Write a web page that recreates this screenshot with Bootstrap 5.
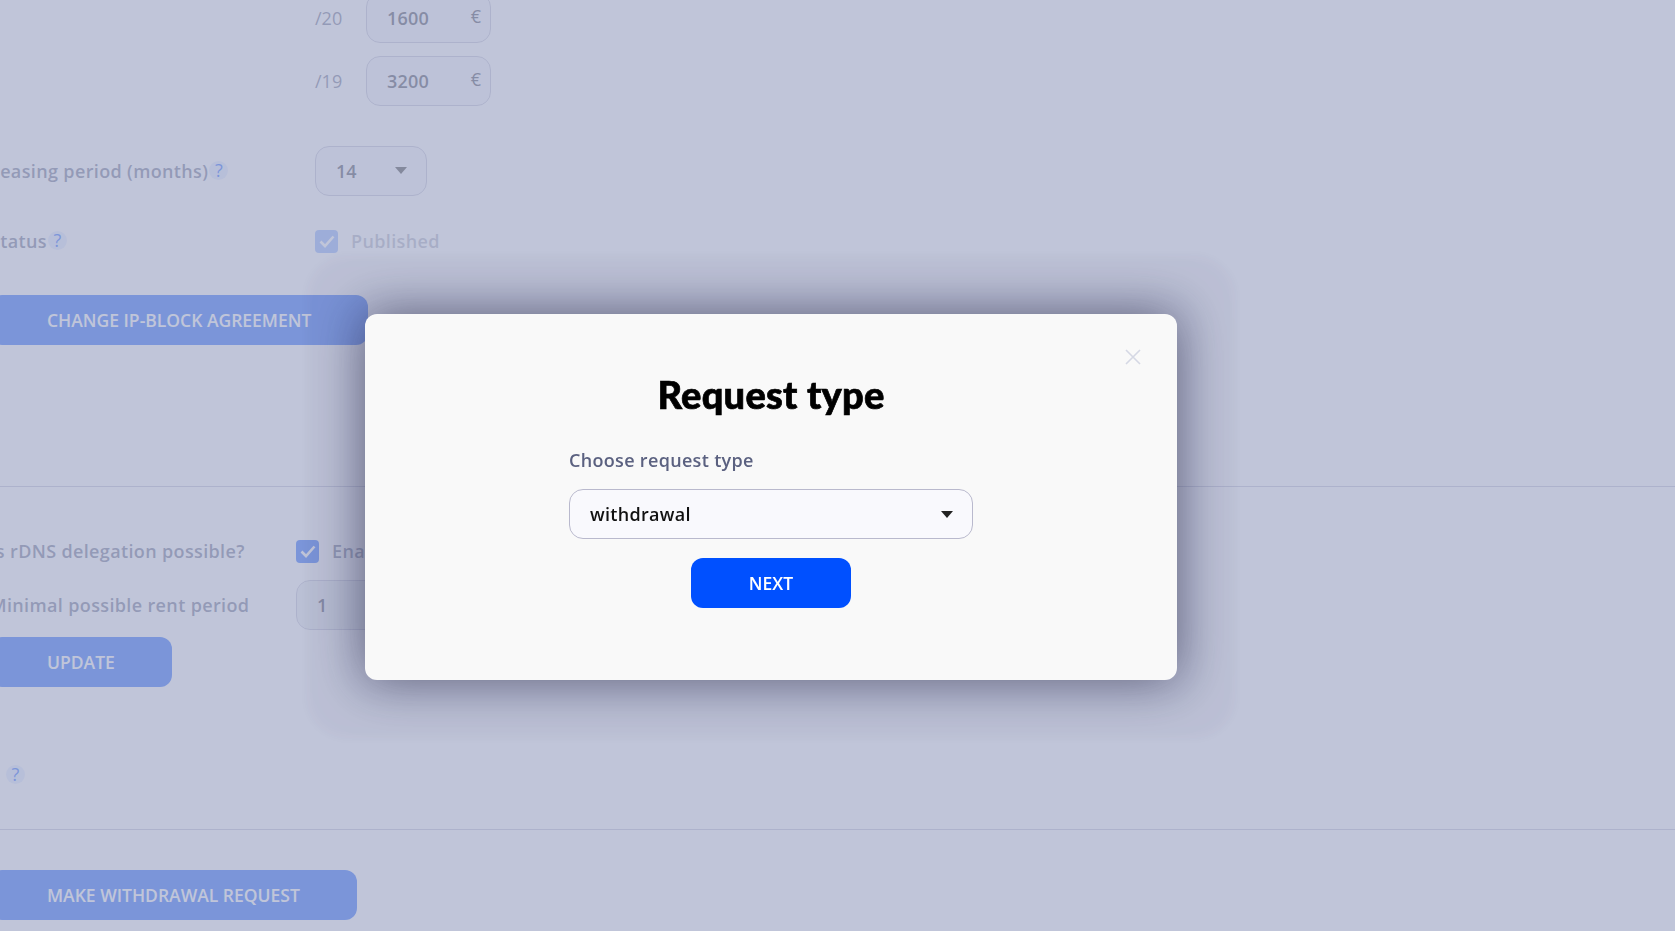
<!DOCTYPE html>
<html lang="en">
<head>
<meta charset="utf-8">
<title>Request type</title>
<link href="https://cdn.jsdelivr.net/npm/bootstrap@5.3.0/dist/css/bootstrap.min.css" rel="stylesheet">
<style>
html,body{height:100%;overflow:hidden;background:#fff;font-family:"Open Sans","Noto Sans",sans-serif;}
.page-sheet{margin:-7px 0 0 -10px;height:938px;overflow:hidden;}
.field-label{width:325px;flex:none;font-size:18px;font-weight:600;letter-spacing:.36px;color:#5b6180;white-space:nowrap;}
.field-label.narrow{width:306px;}
.suffix-text{width:51px;flex:none;font-size:18px;line-height:24px;margin-top:-1px;color:#5b6180;}
.ghost-box{height:50px;border:1px solid #b9b9cd;border-radius:14px;background-color:#f2f3fb;font-size:18px;font-weight:600;color:#2a2d40;box-shadow:none;}
.price-box{width:125px;padding:0 0 1px 20px;letter-spacing:.2px;}
.price-box:disabled{background-color:#f2f3fb;}
.euro-mark{top:50%;right:10px;transform:translateY(-54%);font-size:18px;color:#2a2d40;}
.price-row + .price-row{margin-top:13px;}
.row-lease{margin-top:40px;}
.form-select.lease-select{width:112px;padding:0 0 0 20px;}
.form-select.lease-select,.form-select.type-select{background-image:url("data:image/svg+xml,%3Csvg xmlns='http://www.w3.org/2000/svg' viewBox='0 0 12 8'%3E%3Cpath d='M0 0h12L6 7z' fill='%23222'/%3E%3C/svg%3E");background-repeat:no-repeat;background-size:12px 8px;background-position:right 19px center;}
.form-select.type-select{background-position:right 19px top 21px;}
.row-status{margin-top:33px;height:24px;}
.tick-box{width:23px;height:23px;flex:none;border-radius:4px;background:#0050ff;display:flex;align-items:center;justify-content:center;}
.tick-box.faint{opacity:.5;}
.tick-text{margin-left:13px;font-size:18px;font-weight:600;letter-spacing:.36px;color:#5b6180;}
.tick-text.faint{opacity:.55;}
.hint-dot{display:inline-block;width:19px;height:19px;line-height:19px;margin-left:1px;border-radius:50%;background:rgba(0,80,255,.13);color:#0050ff;font-size:18px;font-weight:500;letter-spacing:0;text-align:center;vertical-align:1px;}
.act-btn{display:block;height:50px;padding:0 57px;border:0;border-radius:12px;background:#0050ff;color:#fff;font-size:17.5px;font-weight:600;line-height:50px;text-transform:uppercase;}
.act-btn:hover{background:#0050ff;color:#fff;}
.btn-change{margin-top:42px;}
.rule-line{margin:0;border:0;border-top:1px solid #b9b9cd;opacity:1;width:calc(100% + 10px);}
.rule-first{margin-top:141px;}
.row-rdns{margin-top:52px;height:24px;}
.row-min{margin-top:17px;height:50px;}
.min-box{width:150px;padding:0 0 0 20px;}
.btn-update{margin-top:7px;}
.row-hint{margin-top:78px;height:20px;}
.hint-dot.alone{margin-left:16px;vertical-align:top;}
.rule-second{margin-top:44px;}
.btn-withdraw{margin-top:40px;}
.veil{opacity:1!important;background:rgba(168,176,203,.73);backdrop-filter:blur(.4px);}
.modal-dialog.req-dialog{max-width:none;width:812px;margin:314px 0 0 365px;}
.req-content{height:366px;border:0;border-radius:12px;background:#f9f9f9;padding-top:55px;align-items:center;
  box-shadow:0 0 50px rgba(30,30,60,.6),0 0 24px 26px rgba(60,40,110,.025),0 0 10px 58px rgba(60,40,110,.03);}
.req-title{margin:0;font-family:Lato,sans-serif;font-size:38px;font-weight:900;line-height:50px;letter-spacing:.25px;color:#000;-webkit-text-stroke:.7px #000;}
.close-x{position:absolute;top:35px;right:36px;padding:0;border:0;background:none;line-height:0;}
.req-form{width:404px;margin-top:29px;}
.req-label{margin:0;font-size:18px;font-weight:600;letter-spacing:.32px;line-height:24px;color:#5b6180;}
.form-select.type-select{display:block;width:404px;height:50px;margin-top:16px;padding:0 0 0 20px;border:1px solid #b9b9cd;border-radius:14px;background-color:#f9f9fd;font-size:18px;font-weight:600;letter-spacing:.3px;color:#111;box-shadow:none;}
.next-btn{display:block;width:160px;height:50px;margin:19px auto 0;padding:0;border:0;border-radius:12px;background:#0050ff;color:#fff;font-size:17.5px;font-weight:600;text-transform:uppercase;}
.next-btn:hover{background:#0050ff;color:#fff;}
</style>
</head>
<body>
<main class="page-sheet">
  <div class="price-row d-flex align-items-center" style="margin-left:325px">
    <span class="suffix-text">/20</span>
    <div class="position-relative">
      <input class="form-control ghost-box price-box" value="1600" disabled>
      <span class="euro-mark position-absolute">€</span>
    </div>
  </div>
  <div class="price-row d-flex align-items-center" style="margin-left:325px">
    <span class="suffix-text">/19</span>
    <div class="position-relative">
      <input class="form-control ghost-box price-box" value="3200" disabled>
      <span class="euro-mark position-absolute">€</span>
    </div>
  </div>
  <div class="row-lease d-flex align-items-center">
    <span class="field-label">Leasing period (months)<span class="hint-dot">?</span></span>
    <select class="form-select ghost-box lease-select"><option>14</option></select>
  </div>
  <div class="row-status d-flex align-items-center">
    <span class="field-label">Status<span class="hint-dot">?</span></span>
    <span class="tick-box faint"><svg width="16" height="13" viewBox="0 0 16 13"><path d="M1.5 6.5 6 11 14.5 1.5" fill="none" stroke="#fff" stroke-width="2.6"/></svg></span>
    <span class="tick-text faint">Published</span>
  </div>
  <button class="btn act-btn btn-change" type="button">Change IP-block agreement</button>
  <hr class="rule-line rule-first">
  <div class="row-rdns d-flex align-items-center">
    <span class="field-label narrow">Is rDNS delegation possible?</span>
    <span class="tick-box"><svg width="16" height="13" viewBox="0 0 16 13"><path d="M1.5 6.5 6 11 14.5 1.5" fill="none" stroke="#fff" stroke-width="2.6"/></svg></span>
    <span class="tick-text">Enabled</span>
  </div>
  <div class="row-min d-flex align-items-center">
    <span class="field-label narrow">Minimal possible rent period</span>
    <input class="form-control ghost-box min-box" value="1" disabled>
  </div>
  <button class="btn act-btn btn-update" type="button">Update</button>
  <div class="row-hint"><span class="hint-dot alone">?</span></div>
  <hr class="rule-line rule-second">
  <button class="btn act-btn btn-withdraw" type="button">Make withdrawal request</button>
</main>

<div class="modal-backdrop show veil"></div>
<div class="modal d-block" tabindex="-1" role="dialog" aria-modal="true">
  <div class="modal-dialog req-dialog">
    <div class="modal-content req-content">
      <button class="close-x" type="button" aria-label="Close"><svg width="16" height="16" viewBox="0 0 16 16"><path d="M1 1 15 15M15 1 1 15" stroke="#d5d8e4" stroke-width="1.6" fill="none"/></svg></button>
      <h2 class="req-title">Request type</h2>
      <div class="req-form">
        <label class="req-label" for="reqType">Choose request type</label>
        <select id="reqType" class="form-select type-select"><option>withdrawal</option><option>deposit</option></select>
        <button class="btn next-btn" type="button">Next</button>
      </div>
    </div>
  </div>
</div>
<script src="https://cdn.jsdelivr.net/npm/bootstrap@5.3.0/dist/js/bootstrap.bundle.min.js"></script>
</body>
</html>
